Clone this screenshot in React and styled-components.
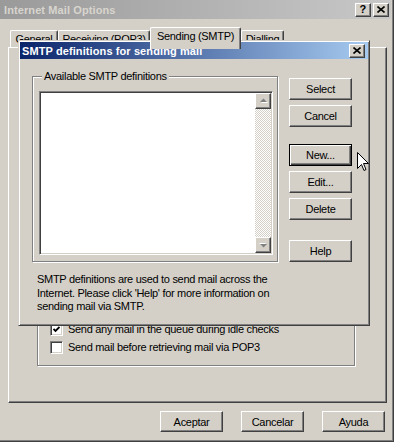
import styled, { createGlobalStyle, css } from 'styled-components';

const GlobalStyle = createGlobalStyle`
  html, body {
    margin: 0;
    padding: 0;
    background: #d4d0c8;
  }
  body {
    font-family: 'Liberation Sans', Arial, sans-serif;
    font-size: 11px;
    letter-spacing: -0.3px;
    color: #000;
  }
  * {
    box-sizing: border-box;
  }
`;

const raised = css`
  border: 1px solid;
  border-color: #fff #404040 #404040 #fff;
  box-shadow: inset -1px -1px 0 #808080, inset 1px 1px 0 #d4d0c8;
`;

const defaultEdge = css`
  border: 1px solid #000;
  box-shadow: inset 1px 1px 0 #fff, inset -1px -1px 0 #404040, inset -2px -2px 0 #808080;
`;

const sunken = css`
  border: 1px solid;
  border-color: #808080 #fff #fff #808080;
  box-shadow: inset 1px 1px 0 #404040, inset -1px -1px 0 #d4d0c8;
`;

const etched = css`
  border: 1px solid #808080;
  box-shadow: inset 1px 1px 0 #fff, 1px 1px 0 #fff;
`;

const Window = styled.div`
  position: relative;
  width: 394px;
  height: 442px;
  display: flex;
  flex-direction: column;
  background: #d4d0c8;
  border-right: 1px solid #404040;
  border-bottom: 1px solid #404040;
  box-shadow: inset -1px -1px 0 #808080;
  overflow: hidden;
`;

const TitleBar = styled.div`
  height: ${p => (p.$active ? 17 : 19)}px;
  flex-shrink: 0;
  display: flex;
  align-items: center;
  padding: ${p => (p.$active ? '0 3px 0 2px' : '0 2px 0 4px')};
  margin-right: ${p => (p.$active ? 0 : 2)}px;
  background: ${p =>
    p.$active
      ? 'linear-gradient(to right, #0a246a, #a6caf0)'
      : 'linear-gradient(to right, #9a9a9a, #c8c8c8)'};
  color: ${p => (p.$active ? '#fff' : '#d8d5ce')};
  font-weight: bold;
  letter-spacing: 0.1px;
`;

const TitleText = styled.span`
  flex: 1;
  white-space: nowrap;
`;

const CaptionButton = styled.div`
  ${raised}
  width: 16px;
  height: 14px;
  margin-left: ${p => (p.$gap ? 2 : 0)}px;
  display: flex;
  align-items: center;
  justify-content: center;
  background: #d4d0c8;
  color: #000;
  font-weight: bold;
  font-size: 11px;
  line-height: 1;
`;

const Body = styled.div`
  flex: 1;
  display: flex;
  flex-direction: column;
  padding: 8px 6px 0 8px;
`;

const TabStrip = styled.div`
  height: 20px;
  display: flex;
  align-items: flex-end;
  padding-left: 2px;
`;

const Tab = styled.div`
  position: relative;
  z-index: ${p => (p.$selected ? 1 : 0)};
  width: ${p => p.$w}px;
  height: ${p => (p.$selected ? 22 : 17)}px;
  margin-bottom: ${p => (p.$selected ? -2 : 0)}px;
  padding-top: 2px;
  text-align: center;
  white-space: nowrap;
  background: #d4d0c8;
  border-top: 1px solid #fff;
  border-left: 1px solid #fff;
  border-right: 1px solid #404040;
  border-radius: 2px 2px 0 0;
  box-shadow: inset -1px 0 0 #808080;
`;

const Panel = styled.div`
  height: 356px;
  display: flex;
  flex-direction: column;
  justify-content: flex-end;
  border: 1px solid;
  border-color: #fff #404040 #404040 #fff;
  box-shadow: inset -1px -1px 0 #808080;
  padding: 0 31px 36px 28px;
`;

const GroupBox = styled.div`
  ${etched}
  height: ${p => (p.$h ? `${p.$h}px` : 'auto')};
  display: flex;
  flex-direction: column;
  justify-content: ${p => (p.$bottom ? 'flex-end' : 'flex-start')};
  padding: ${p => p.$pad};
`;

const GroupLabel = styled.span`
  align-self: flex-start;
  margin: -8px 0 0 9px;
  padding: 0 2px;
  line-height: 14px;
  background: #d4d0c8;
  white-space: nowrap;
`;

const CheckRow = styled.label`
  height: 18px;
  display: flex;
  align-items: center;
  gap: 5px;
  white-space: nowrap;
`;

const CheckBox = styled.span`
  ${sunken}
  width: 13px;
  height: 13px;
  flex-shrink: 0;
  display: flex;
  align-items: center;
  justify-content: center;
  background: #fff;
`;

const Footer = styled.div`
  display: flex;
  justify-content: flex-end;
  gap: 18px;
  padding: 8px 2px 0 0;
`;

const Button = styled.button`
  ${p => (p.$default ? defaultEdge : raised)}
  width: 63px;
  height: ${p => p.$h || 22}px;
  margin-top: ${p => p.$top || 0}px;
  flex-shrink: 0;
  padding: 0;
  background: #d4d0c8;
  color: #000;
  font: inherit;
  letter-spacing: inherit;
  text-align: center;
`;

const Dialog = styled.div`
  position: absolute;
  left: 18px;
  top: 40px;
  width: 352px;
  height: 286px;
  display: flex;
  flex-direction: column;
  padding: 1px;
  background: #d4d0c8;
  border: 1px solid;
  border-color: #d4d0c8 #404040 #404040 #d4d0c8;
  box-shadow: inset 1px 1px 0 #fff, inset -1px -1px 0 #808080;
`;

const DialogContent = styled.div`
  display: flex;
  gap: 11px;
  padding: 17px 16px 0 12px;
`;

const LeftColumn = styled.div`
  width: 246px;
  display: flex;
  flex-direction: column;
`;

const ButtonColumn = styled.div`
  display: flex;
  flex-direction: column;
`;

const ListBox = styled.div`
  ${sunken}
  height: 164px;
  margin: 8px 4px 0 6px;
  padding: 1px;
  display: flex;
  justify-content: flex-end;
  background: #fff;
`;

const ScrollTrack = styled.div`
  width: 16px;
  display: flex;
  flex-direction: column;
  justify-content: space-between;
  background: repeating-conic-gradient(#fff 0 25%, #d4d0c8 0 50%) 0 0 / 2px 2px;
`;

const ScrollButton = styled.div`
  ${raised}
  width: 16px;
  height: 16px;
  display: flex;
  align-items: center;
  justify-content: center;
  background: #d4d0c8;
`;

const Description = styled.p`
  margin: 11px 0 0 5px;
  line-height: 13.5px;
  white-space: nowrap;
`;

const Cursor = styled.svg`
  position: absolute;
  left: 357px;
  top: 152px;
`;

const CloseGlyph = () => (
  <svg width="8" height="7" viewBox="0 0 8 7">
    <path d="M0.5 0.5 L7.5 6.5 M7.5 0.5 L0.5 6.5" stroke="#000" strokeWidth="1.6" fill="none" />
  </svg>
);

const Arrow = ({ down }) => (
  <svg width="9" height="6" viewBox="0 0 9 6">
    <g transform={down ? 'rotate(180 4.5 3)' : undefined}>
      <polygon points="2,5 9,5 5.5,1.5" fill="#fff" />
      <polygon points="1,4 8,4 4.5,0.5" fill="#808080" />
    </g>
  </svg>
);

const Check = () => (
  <svg width="7" height="7" viewBox="0 0 7 7">
    <polyline points="0.5,3 2.5,5 6.5,1" stroke="#000" strokeWidth="1.8" fill="none" />
  </svg>
);

const tabs = [
  { label: 'General', w: 48 },
  { label: 'Receiving (POP3)', w: 92 },
  { label: 'Sending (SMTP)', w: 91, selected: true },
  { label: 'Dialling', w: 43 },
];

export default function App() {
  return (
    <>
      <GlobalStyle />
      <Window>
        <TitleBar>
          <TitleText>Internet Mail Options</TitleText>
          <CaptionButton>?</CaptionButton>
          <CaptionButton $gap>
            <CloseGlyph />
          </CaptionButton>
        </TitleBar>
        <Body>
          <TabStrip>
            {tabs.map(t => (
              <Tab key={t.label} $w={t.w} $selected={t.selected}>
                {t.label}
              </Tab>
            ))}
          </TabStrip>
          <Panel>
            <GroupBox $h={116} $bottom $pad="0 0 9px 12px">
              <CheckRow>
                <CheckBox>
                  <Check />
                </CheckBox>
                Send any mail in the queue during idle checks
              </CheckRow>
              <CheckRow>
                <CheckBox />
                Send mail before retrieving mail via POP3
              </CheckRow>
            </GroupBox>
          </Panel>
          <Footer>
            <Button $h={21}>Aceptar</Button>
            <Button $h={21}>Cancelar</Button>
            <Button $h={21}>Ayuda</Button>
          </Footer>
        </Body>

        <Dialog>
          <TitleBar $active>
            <TitleText>SMTP definitions for sending mail</TitleText>
            <CaptionButton>
              <CloseGlyph />
            </CaptionButton>
          </TitleBar>
          <DialogContent>
            <LeftColumn>
              <GroupBox $pad="0 0 6px 0">
                <GroupLabel>Available SMTP definitions</GroupLabel>
                <ListBox>
                  <ScrollTrack>
                    <ScrollButton>
                      <Arrow />
                    </ScrollButton>
                    <ScrollButton>
                      <Arrow down />
                    </ScrollButton>
                  </ScrollTrack>
                </ListBox>
              </GroupBox>
              <Description>
                SMTP definitions are used to send mail across the
                <br />
                Internet. Please click 'Help' for more information on
                <br />
                sending mail via SMTP.
              </Description>
            </LeftColumn>
            <ButtonColumn>
              <Button $top={2}>Select</Button>
              <Button $top={5}>Cancel</Button>
              <Button $top={17} $default>New...</Button>
              <Button $top={5}>Edit...</Button>
              <Button $top={5}>Delete</Button>
              <Button $top={20}>Help</Button>
            </ButtonColumn>
          </DialogContent>
        </Dialog>

        <Cursor width="12" height="20" viewBox="0 0 12 20">
          <path
            d="M0.5 0.5 L0.5 16.5 L4.5 12.5 L7 18.5 L9 17.5 L6.5 11.5 L11.5 11.5 Z"
            fill="#fff"
            stroke="#000"
            strokeWidth="1"
          />
        </Cursor>
      </Window>
    </>
  );
}
